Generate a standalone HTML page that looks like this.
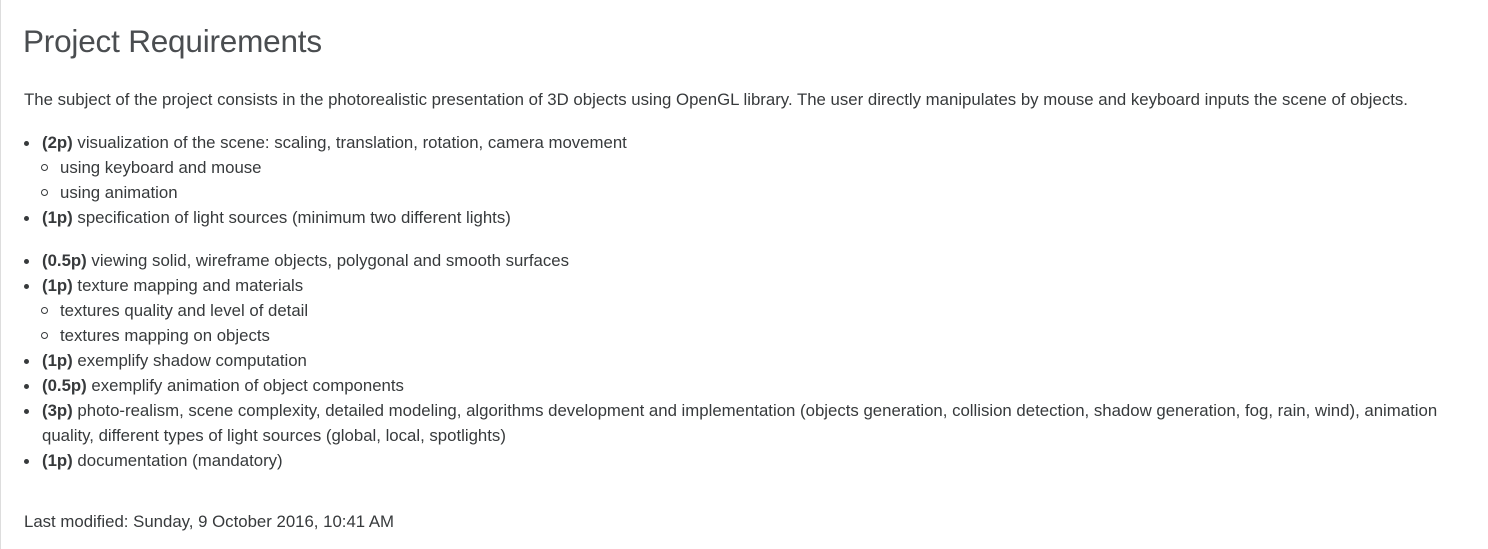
<!DOCTYPE html>
<html><head><style>
html,body{margin:0;padding:0;background:#fff;}
body{width:1488px;height:549px;overflow:hidden;position:relative;font-family:"Liberation Sans",sans-serif;color:#373a3c;font-size:16.8px;}
.bl{position:absolute;left:0;top:0;width:1px;height:549px;background:#ddd;}
h1{position:absolute;left:23px;top:21px;margin:0;font-weight:normal;font-size:31.5px;line-height:40px;color:#4a4d50;letter-spacing:-0.2px;}
.l{position:absolute;left:24px;line-height:25px;white-space:nowrap;}
.d{position:absolute;left:42px;line-height:25px;white-space:nowrap;}
.d::before{content:"";position:absolute;left:-18px;top:11px;width:5px;height:5px;border-radius:50%;background:#373a3c;}
.s{position:absolute;left:60px;line-height:25px;white-space:nowrap;}
.s::before{content:"";position:absolute;left:-19px;top:9px;width:5px;height:5px;border-radius:50%;border:1px solid #373a3c;}
b{font-weight:bold;}
</style></head><body>
<div class="bl"></div>
<h1>Project Requirements</h1>
<div class="l" style="top:87px">The subject of the project consists in the photorealistic presentation of 3D objects using OpenGL library. The user directly manipulates by mouse and keyboard inputs the scene of objects.</div>
<div class="d" style="top:130px"><b>(2p)</b> visualization of the scene: scaling, translation, rotation, camera movement</div>
<div class="s" style="top:155px">using keyboard and mouse</div>
<div class="s" style="top:180px">using animation</div>
<div class="d" style="top:205px"><b>(1p)</b> specification of light sources (minimum two different lights)</div>
<div class="d" style="top:248px"><b>(0.5p)</b> viewing solid, wireframe objects, polygonal and smooth surfaces</div>
<div class="d" style="top:273px"><b>(1p)</b> texture mapping and materials</div>
<div class="s" style="top:298px">textures quality and level of detail</div>
<div class="s" style="top:323px">textures mapping on objects</div>
<div class="d" style="top:348px"><b>(1p)</b> exemplify shadow computation</div>
<div class="d" style="top:373px"><b>(0.5p)</b> exemplify animation of object components</div>
<div class="d" style="top:398px"><b>(3p)</b> photo-realism, scene complexity, detailed modeling, algorithms development and implementation (objects generation, collision detection, shadow generation, fog, rain, wind), animation</div>
<div class="l" style="top:423px;left:42px">quality, different types of light sources (global, local, spotlights)</div>
<div class="d" style="top:448px"><b>(1p)</b> documentation (mandatory)</div>
<div class="l" style="top:509px">Last modified: Sunday, 9 October 2016, 10:41 AM</div>
</body></html>
